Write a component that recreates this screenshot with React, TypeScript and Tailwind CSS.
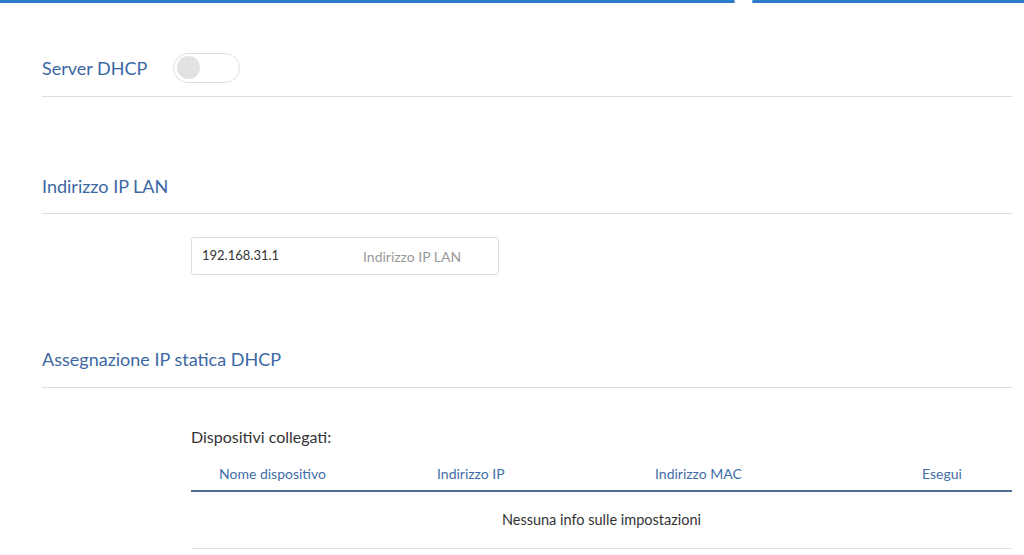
import React from "react";

const font = { fontFamily: "Lato, 'Open Sans', sans-serif" };

export default function App() {
  return (
    <div className="w-[1024px] h-[555px] bg-white overflow-hidden relative" style={font}>
      {/* top bar */}
      <div className="flex h-[3px]">
        <div className="w-[735px] bg-[#2f7bcb] rounded-r-full" />
        <div className="w-[17px]" />
        <div className="flex-1 bg-[#2f7bcb] rounded-l-full" />
      </div>

      <div className="pl-[42px] pr-[12px]">
        {/* Server DHCP */}
        <div className="flex items-center h-[94px] pt-[36px] border-b border-[#dcdcdc]">
          <span className="text-[18px] text-[#3b68a3] leading-none">Server DHCP</span>
          <div className="ml-[26px] w-[67px] h-[30px] rounded-full border border-[#dedede] bg-white flex items-center px-[3px]">
            <div className="w-[23px] h-[23px] rounded-full bg-[#e2e2e2]" />
          </div>
        </div>

        {/* Indirizzo IP LAN */}
        <div className="mt-[73px] h-[44px] flex items-start border-b border-[#dcdcdc]">
          <span className="text-[18px] text-[#3b68a3] leading-none mt-[7px]">Indirizzo IP LAN</span>
        </div>
        <div className="pl-[149px] pt-[23px]">
          <div className="w-[308px] h-[38px] border border-[#dcdcdc] rounded-[3px] flex items-center px-[10px] text-[13px]">
            <span className="w-[161px] text-[#333]">192.168.31.1</span>
            <span className="text-[14px] text-[#9a9a9a]">Indirizzo IP LAN</span>
          </div>
        </div>

        {/* Assegnazione */}
        <div className="mt-[68px] h-[45px] flex items-start border-b border-[#dcdcdc]">
          <span className="text-[18px] text-[#3b68a3] leading-none mt-[7px]">Assegnazione IP statica DHCP</span>
        </div>

        <div className="pl-[149px] pt-[41px]">
          <div className="text-[16px] text-[#333] leading-none">Dispositivi collegati:</div>
          <div className="mt-[11px] flex items-center h-[36px] border-b-2 border-[#4d6d94] text-[14px] text-[#3f6ea8]">
            <div className="w-[246px] pl-[28px]">Nome dispositivo</div>
            <div className="w-[218px]">Indirizzo IP</div>
            <div className="w-[267px]">Indirizzo MAC</div>
            <div className="flex-1">Esegui</div>
          </div>
          <div className="h-[57px] flex items-center justify-center border-b border-[#e2e2e2] text-[14.5px] text-[#333]">
            Nessuna info sulle impostazioni
          </div>
        </div>
      </div>
    </div>
  );
}
